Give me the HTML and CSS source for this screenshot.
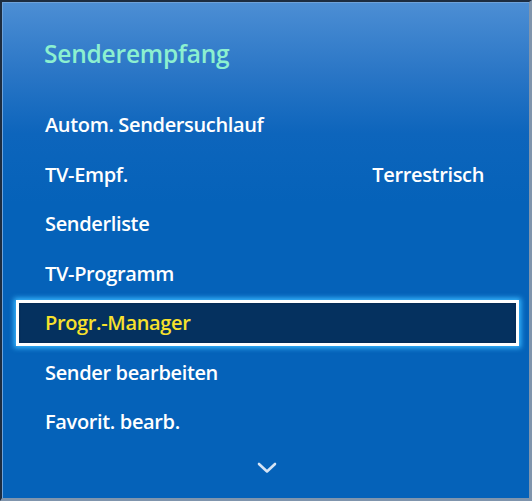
FILE: index.html
```html
<!DOCTYPE html>
<html lang="de">
<head>
<meta charset="utf-8">
<title>Senderempfang</title>
<link rel="stylesheet" href="styles.css">
</head>
<body>
<div class="frame">
  <div class="panel">
    <h1 class="title">Senderempfang</h1>
    <ul class="menu">
      <li class="item"><span class="label">Autom. Sendersuchlauf</span></li>
      <li class="item"><span class="label">TV-Empf.</span><span class="value">Terrestrisch</span></li>
      <li class="item"><span class="label">Senderliste</span></li>
      <li class="item"><span class="label">TV-Programm</span></li>
      <li class="item selected"><span class="label">Progr.-Manager</span></li>
      <li class="item"><span class="label">Sender bearbeiten</span></li>
      <li class="item"><span class="label">Favorit. bearb.</span></li>
    </ul>
    <div class="more">
      <svg class="chevron" width="20" height="12" viewBox="0 0 20 12" aria-hidden="true">
        <path d="M2 2 L10 9.5 L18 2" fill="none" stroke="#d6e4f5" stroke-width="2.6" stroke-linecap="round" stroke-linejoin="round"/>
      </svg>
    </div>
  </div>
</div>
</body>
</html>
```

FILE: styles.css
```css
* { box-sizing: border-box; }

html, body {
  margin: 0;
  padding: 0;
  background: #ffffff;
}

body {
  width: 532px;
  height: 501px;
  font-family: "Open Sans", "Noto Sans", "DejaVu Sans", sans-serif;
}

.frame {
  width: 532px;
  height: 501px;
  border-top: 2px solid #1c2c40;
  border-left: 2px solid #1c2c40;
  border-right: 3px solid #8095ad;
  border-bottom: 3px solid #8095ad;
}

.panel {
  height: 100%;
  display: flex;
  flex-direction: column;
  border-top: 1px solid #6ea2da;
  border-left: 1px solid #6ea2da;
  background: linear-gradient(to bottom, #4c8ed4 0px, #2a76c6 70px, #0d65bc 130px, #0562b9 200px, #0562b9 100%);
}

.title {
  margin: 0;
  padding: 34px 0 0 41px;
  height: 97px;
  font-size: 24.5px;
  font-weight: 600;
  line-height: 34px;
  color: #8cf0d0;
  letter-spacing: -0.2px;
}

.menu {
  list-style: none;
  margin: 0 10px 0 13px;
  padding: 0;
  display: flex;
  flex-direction: column;
}

.item {
  height: 49.5px;
  display: flex;
  align-items: center;
  justify-content: space-between;
  padding: 0 35px 0 29px;
  font-size: 20px;
  font-weight: 600;
  color: #ffffff;
  letter-spacing: -0.35px;
}

.item.selected {
  margin: 1.5px 0;
  height: 46.5px;
  padding-left: 26px;
  padding-right: 32px;
  border: 3px solid #ffffff;
  background: #05315f;
  color: #f7e12c;
  box-shadow: 0 0 5px 2px #38b8ff, inset 0 0 2px #0a2040;
}

.more {
  flex: 1;
  display: flex;
  justify-content: center;
  padding-top: 15px;
}

.chevron {
  display: block;
  margin-left: 2px;
}
```
